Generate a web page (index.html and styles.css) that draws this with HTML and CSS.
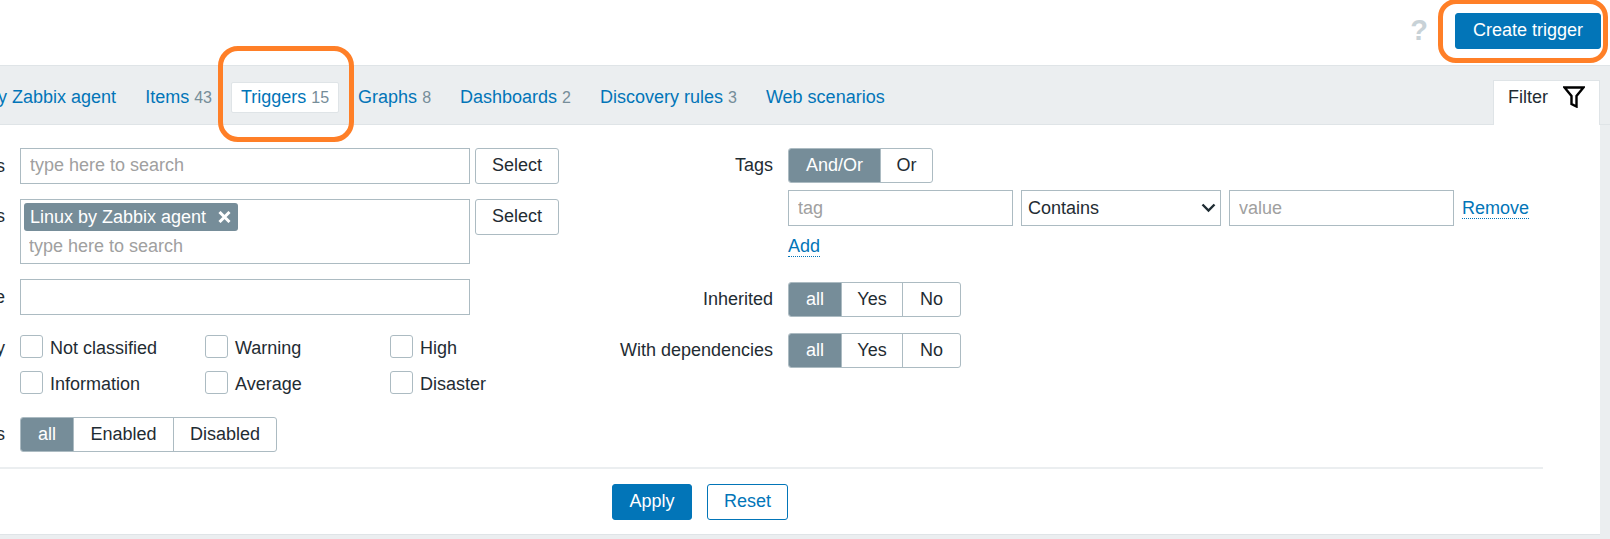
FILE: index.html
```html
<!DOCTYPE html>
<html lang="en">
<head>
  <meta charset="UTF-8" />
  <meta name="viewport" content="width=device-width, initial-scale=1.0"/>
  <title>Triggers</title>
  <link rel="stylesheet" href="styles.css">
</head>
<body>

  <header class="top">
    <span class="help">?</span>
    <button class="btn btn-primary btn-create">Create trigger</button>
  </header>

  <nav class="tabs">
    <a class="tab" href="#">Linux by Zabbix agent</a>
    <a class="tab" href="#">Items <span class="count">43</span></a>
    <a class="tab tab-active" href="#">Triggers <span class="count">15</span></a>
    <a class="tab" href="#">Graphs <span class="count">8</span></a>
    <a class="tab" href="#">Dashboards <span class="count">2</span></a>
    <a class="tab" href="#">Discovery rules <span class="count">3</span></a>
    <a class="tab" href="#">Web scenarios</a>
    <div class="filter-tab">
      Filter
      <svg class="filter-icon" width="22" height="22" viewBox="0 0 22 22">
        <path d="M1.5 1.5H20.5L13.5 10V20.5L8.5 18V10Z" fill="none" stroke="#000" stroke-width="2.4"/>
      </svg>
    </div>
  </nav>

  <main class="panel">
    <div class="filter-cols">
      <div class="col-left">
        <div class="row">
          <label class="label">Template groups</label>
          <div class="control inline">
            <input class="input input-wide" type="text" placeholder="type here to search" />
            <button class="btn btn-select">Select</button>
          </div>
        </div>
        <div class="row">
          <label class="label label-high">Templates</label>
          <div class="control inline">
            <div class="multi">
              <span class="token">Linux by Zabbix agent
                <svg width="13" height="12" viewBox="0 0 13 12"><path d="M1.5 1L11.5 11M11.5 1L1.5 11" stroke="#fff" stroke-width="3"/></svg>
              </span>
              <input class="multi-input" type="text" placeholder="type here to search" />
            </div>
            <button class="btn btn-select">Select</button>
          </div>
        </div>
        <div class="row">
          <label class="label">Name</label>
          <div class="control">
            <input class="input input-wide" type="text" />
          </div>
        </div>
        <div class="row row-severity">
          <label class="label label-check">Severity</label>
          <div class="checks">
            <label class="check"><span class="box"></span>Not classified</label>
            <label class="check"><span class="box"></span>Warning</label>
            <label class="check"><span class="box"></span>High</label>
            <label class="check"><span class="box"></span>Information</label>
            <label class="check"><span class="box"></span>Average</label>
            <label class="check"><span class="box"></span>Disaster</label>
          </div>
        </div>
        <div class="row">
          <label class="label">Status</label>
          <div class="seg">
            <span class="seg-item seg-on seg-all">all</span>
            <span class="seg-item seg-enabled">Enabled</span>
            <span class="seg-item seg-disabled">Disabled</span>
          </div>
        </div>
      </div>

      <div class="col-right">
        <div class="row">
          <label class="label">Tags</label>
          <div class="seg">
            <span class="seg-item seg-on seg-andor">And/Or</span>
            <span class="seg-item seg-or">Or</span>
          </div>
        </div>
        <div class="row row-tag">
          <span class="label"></span>
          <div class="control">
            <div class="tag-line">
              <input class="input input-tag" type="text" placeholder="tag" />
              <div class="select-wrap">
                <select class="select"><option>Contains</option></select>
                <svg class="chevron" width="15" height="10" viewBox="0 0 15 10"><path d="M1.5 1.5L7.5 7.5L13.5 1.5" fill="none" stroke="#1f2c33" stroke-width="2.4"/></svg>
              </div>
              <input class="input input-value" type="text" placeholder="value" />
              <a class="link" href="#">Remove</a>
            </div>
            <a class="link link-add" href="#">Add</a>
          </div>
        </div>
        <div class="row row-inherited">
          <label class="label">Inherited</label>
          <div class="seg">
            <span class="seg-item seg-on seg-all">all</span>
            <span class="seg-item seg-yes">Yes</span>
            <span class="seg-item seg-no">No</span>
          </div>
        </div>
        <div class="row row-deps">
          <label class="label">With dependencies</label>
          <div class="seg">
            <span class="seg-item seg-on seg-all">all</span>
            <span class="seg-item seg-yes">Yes</span>
            <span class="seg-item seg-no">No</span>
          </div>
        </div>
      </div>
    </div>

    <div class="actions">
      <button class="btn btn-primary btn-apply">Apply</button>
      <button class="btn btn-outline">Reset</button>
    </div>
  </main>

  <!-- hand-drawn highlights on top of the screenshot -->
  <div class="mark mark-create"></div>
  <div class="mark mark-triggers"></div>

</body>
</html>
```

FILE: styles.css
```css
* {
  box-sizing: border-box;
}

html, body {
  height: 100%;
}

body {
  margin: 0;
  font-family: "Liberation Sans", Arial, sans-serif;
  font-size: 18px;
  color: #1f2c33;
  background-color: #ebeef0;
  overflow: hidden;
  position: relative;
}

input, select, button {
  font-family: inherit;
  font-size: 18px;
  color: inherit;
}

a {
  text-decoration: none;
}

/* top bar */
.top {
  height: 65px;
  background-color: #fff;
  display: flex;
  justify-content: flex-end;
  align-items: flex-start;
  padding: 13px 9px 0 0;
}

.help {
  font-size: 29px;
  font-weight: bold;
  line-height: 33px;
  color: #c8d2d7;
  margin: 1px 27px 0 0;
}

.btn {
  height: 36px;
  border-radius: 3px;
  background: #fff;
  padding: 0 0 2px;
  cursor: pointer;
}

.btn-primary {
  background-color: #0275b8;
  border: 1px solid #0275b8;
  color: #fff;
}

.btn-create {
  width: 146px;
}

.btn-select {
  width: 84px;
  border: 1px solid #acbbc2;
  margin-left: 5px;
}

.btn-apply {
  width: 80px;
}

.btn-outline {
  width: 81px;
  border: 1px solid #0275b8;
  color: #0275b8;
}

/* tabs */
.tabs {
  height: 60px;
  display: flex;
  align-items: flex-end;
  border-top: 1px solid #dfe4e7;
  border-bottom: 1px solid #dfe4e7;
  padding-right: 10px;
  margin-left: -70px;
}

.tab {
  height: 31px;
  margin: 0 9px 11px 0;
  padding: 0 9px;
  line-height: 29px;
  color: #0275b8;
  white-space: nowrap;
  border: 1px solid transparent;
  border-radius: 2px;
}

.tab-active {
  background-color: #fff;
  border-color: #dfe4e7;
}

.count {
  color: #768d99;
  font-size: 16px;
}

.filter-tab {
  margin-left: auto;
  width: 107px;
  height: 45px;
  margin-bottom: -1px;
  padding: 3px 0 0 14px;
  background-color: #fff;
  border: 1px solid #dfe4e7;
  border-bottom: 0;
  display: flex;
  align-items: flex-start;
  line-height: 26px;
}

.filter-icon {
  margin: 2px 0 0 15px;
}

/* filter panel */
.panel {
  width: 1600px;
  height: 410px;
  background-color: #fff;
  border-bottom: 1px solid #dfe4e7;
  padding-top: 23px;
}

.filter-cols {
  display: flex;
  height: 321px;
  border-bottom: 2px solid #ebeef0;
  width: 1543px;
}

.col-left {
  flex: none;
  width: 735px;
  margin-left: -145px;
}

.col-right {
  flex: 1;
}

.row {
  display: flex;
  align-items: center;
  gap: 15px;
  margin-bottom: 15px;
}

.label {
  width: 150px;
  flex: none;
  text-align: right;
  white-space: nowrap;
}

.col-right .label {
  width: 183px;
}

.label-high {
  align-self: flex-start;
  line-height: 34px;
}

.label-check {
  align-self: flex-start;
  line-height: 27px;
}

.row-severity {
  margin-top: 20px;
  margin-bottom: 23px;
}

.inline {
  display: flex;
  align-items: flex-start;
}

.input {
  height: 36px;
  border: 1px solid #acbbc2;
  padding: 0 9px;
  outline: none;
  background: #fff;
}

.input::placeholder,
.multi-input::placeholder {
  color: #a0a0a0;
  opacity: 1;
}

.input-wide {
  width: 450px;
  display: block;
  padding-bottom: 2px;
}

.multi {
  width: 450px;
  height: 65px;
  border: 1px solid #acbbc2;
  padding: 3px 3px 0 3px;
}

.token {
  display: inline-flex;
  align-items: center;
  justify-content: space-between;
  height: 28px;
  width: 214px;
  padding: 0 7px 0 6px;
  background-color: #768d99;
  color: #fff;
  border-radius: 3px;
  white-space: nowrap;
}

.multi-input {
  display: block;
  border: 0;
  outline: none;
  height: 30px;
  width: 400px;
  padding: 0 5px;
}

.checks {
  display: grid;
  grid-template-columns: repeat(3, 185px);
  row-gap: 13px;
}

.check {
  display: flex;
  align-items: flex-start;
  height: 23px;
  gap: 7px;
  line-height: 26px;
}

.box {
  width: 23px;
  height: 23px;
  border: 1px solid #acbbc2;
  border-radius: 3px;
  background: #fff;
}

/* segmented radio groups */
.seg {
  display: flex;
  height: 35px;
  border: 1px solid #acbbc2;
  border-radius: 3px;
  overflow: hidden;
}

.seg-item {
  display: flex;
  align-items: center;
  justify-content: center;
  border-left: 1px solid #acbbc2;
}

.seg-item:first-child {
  border-left: 0;
}

.seg-on {
  background-color: #768d99;
  color: #fff;
}

.seg-all { width: 52px; }
.seg-enabled { width: 100px; }
.seg-disabled { width: 103px; }
.seg-andor { width: 91px; }
.seg-or { width: 52px; }
.seg-yes { width: 61px; }
.seg-no { width: 58px; }

.row-tag {
  margin-top: -8px;
  align-items: flex-start;
}

.tag-line {
  display: flex;
  align-items: center;
  gap: 8px;
}

.input-tag {
  width: 225px;
}

.input-value {
  width: 225px;
}

.select-wrap {
  position: relative;
  width: 200px;
}

.select {
  appearance: none;
  display: block;
  width: 100%;
  height: 36px;
  border: 1px solid #acbbc2;
  border-radius: 0;
  background: #fff;
  padding: 0 6px;
  outline: none;
}

.chevron {
  position: absolute;
  right: 5px;
  top: 13px;
  pointer-events: none;
}

.link {
  color: #0275b8;
  border-bottom: 1px dotted #0275b8;
  line-height: 20px;
}

.link-add {
  display: inline-block;
  margin: 10px 0 0;
}

.row-inherited {
  margin-top: 25px;
}

.row-deps {
  margin-top: 16px;
}

.actions {
  display: flex;
  gap: 15px;
  padding: 15px 0 0 612px;
}

/* orange highlight marks */
.mark {
  position: absolute;
  border: 5px solid #ff7f27;
  pointer-events: none;
}

.mark-create {
  left: 1438px;
  top: -1px;
  width: 170px;
  height: 64px;
  border-radius: 18px;
}

.mark-triggers {
  left: 218px;
  top: 46px;
  width: 136px;
  height: 96px;
  border-radius: 20px;
}
```
